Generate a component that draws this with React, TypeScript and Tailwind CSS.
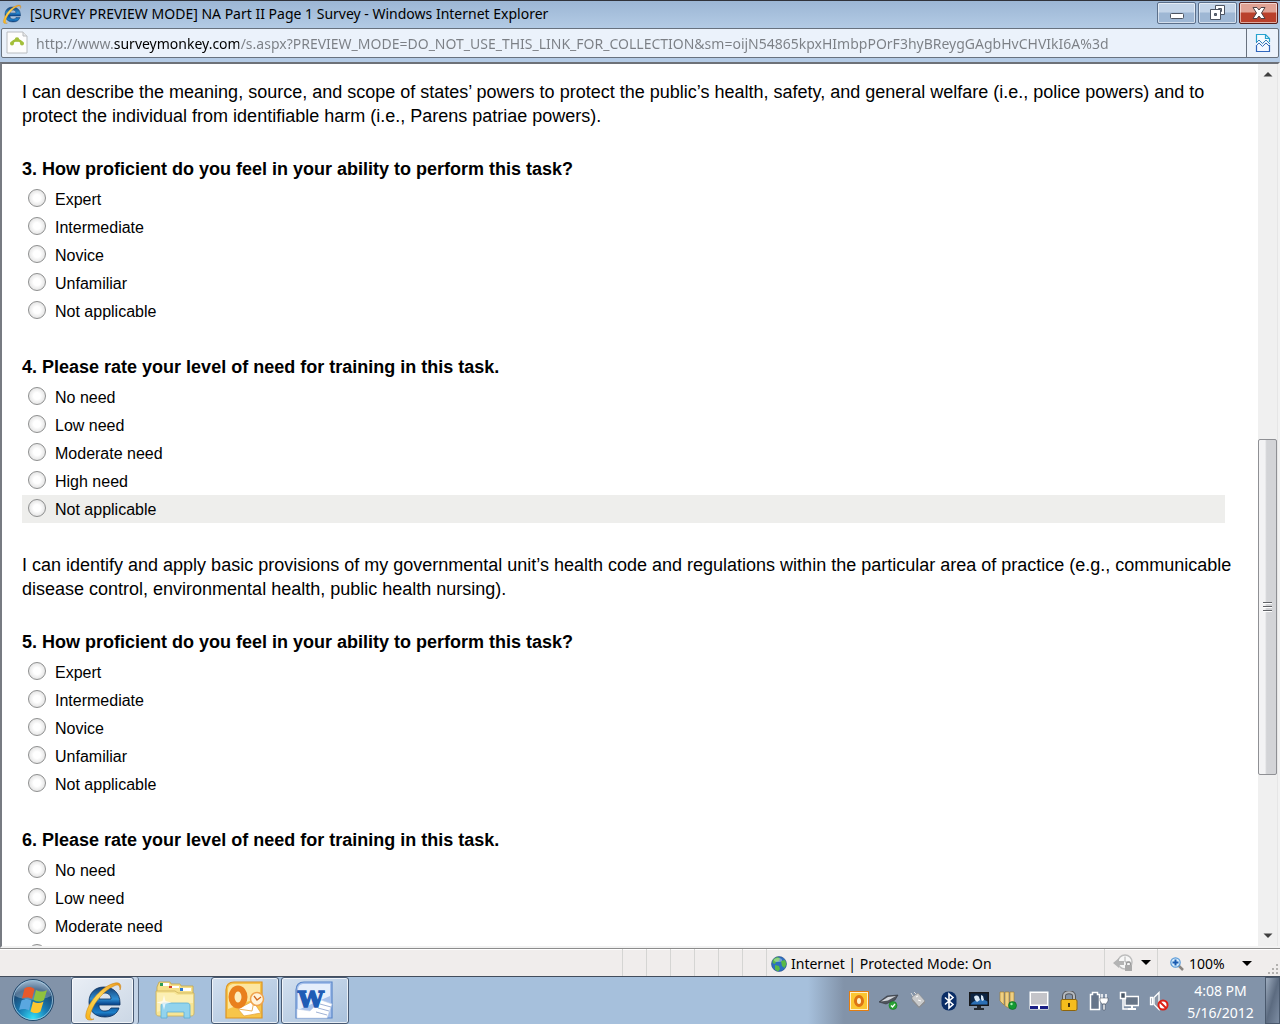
import React, { useState } from "react";

const PROFICIENCY = ["Expert", "Intermediate", "Novice", "Unfamiliar", "Not applicable"];
const NEED = ["No need", "Low need", "Moderate need", "High need", "Not applicable"];

function IeLogo({ className }: { className: string }) {
  return (
    <svg viewBox="0 0 40 40" className={className} aria-hidden="true">
      <defs>
        <linearGradient id="ieBlue" x1="0" y1="0" x2="0" y2="1">
          <stop offset="0" stopColor="#123f74" />
          <stop offset="0.4" stopColor="#2f8fd4" />
          <stop offset="0.55" stopColor="#0f4f97" />
          <stop offset="0.85" stopColor="#1c7fc9" />
          <stop offset="1" stopColor="#0f3f80" />
        </linearGradient>
        <linearGradient id="ieGold" x1="0" y1="1" x2="1" y2="0">
          <stop offset="0" stopColor="#f6b21a" />
          <stop offset="0.5" stopColor="#ffd95a" />
          <stop offset="1" stopColor="#e9981a" />
        </linearGradient>
      </defs>
      <path
        fillRule="evenodd"
        fill="url(#ieBlue)"
        stroke="#0a2f5c"
        strokeWidth="0.8"
        d="M21 6C30 6 37 12 37 22v2H16c0 4 2 6 6 6 3 0 5-1 6-3h8c-2 6-7 9-14 9C12 36 6 30 6 21S12 6 21 6ZM16 18h12c0-4-3-6-6-6s-6 2-6 6Z"
      />
      <path
        fill="url(#ieGold)"
        stroke="#c97c0c"
        strokeWidth="0.5"
        d="M37 9c2-5 0-8-5-7C21 4 8 18 4 29c-2 6-2 10 3 10 1 0 2 0 4-1-4 1-5-2-3-7C12 20 22 9 31 5c4-2 6-1 6 4Z"
      />
    </svg>
  );
}

function SurveyPageIcon() {
  return (
    <svg viewBox="0 0 22 24" className="h-6 w-[22px]" aria-hidden="true">
      <path d="M1 1h16l4 4v17H1z" fill="#fdfdfd" stroke="#b9bcc0" />
      <path d="M17 1v4h4" fill="#e8e8e8" stroke="#b9bcc0" />
      <path d="M5.500 13C7.500 8 14.500 8 16.500 13" fill="none" stroke="#a3bf3a" strokeWidth="2.500" />
      <circle cx="6" cy="12.500" r="2" fill="#a3bf3a" />
      <circle cx="16" cy="12.500" r="2" fill="#a3bf3a" />
      <circle cx="11" cy="8.500" r="2.200" fill="#a3bf3a" />
    </svg>
  );
}

function BrokenPageIcon() {
  return (
    <svg viewBox="0 0 16 20" className="h-5 w-4" fill="none" aria-hidden="true">
      <path d="M1.500 9V1.500h9l4 4V9" fill="#f4fbff" stroke="#27a3cf" strokeWidth="1.200" />
      <path d="M10.500 1.500v4h4" stroke="#27a3cf" strokeWidth="1.200" />
      <path d="M1.500 12v6.500h13V12" fill="#f4f8ff" stroke="#2f66bd" strokeWidth="1.200" />
      <path d="M1 10l3-3 3.500 3.500L11 7l4 4" stroke="#3a80b8" />
      <path d="M1 13l3-3 3.500 3.500L11 10l4 4" stroke="#3a70b8" />
    </svg>
  );
}

const windowButton =
  "flex h-[22px] w-[39px] items-center justify-center rounded-[2px] border shadow-[inset_0_0_0_1px_rgba(255,255,255,0.55)]";

function TitleBar() {
  return (
    <header className="flex h-7 shrink-0 items-start border-t border-[#303239] bg-linear-to-b from-[#9cb6d4] to-[#b3cbe5] pl-[2px]">
      <IeLogo className="mt-[3px] h-5 w-5" />
      <h1 className="ml-2 min-w-0 flex-1 truncate text-sm leading-[26px] text-black">
        [SURVEY PREVIEW MODE] NA Part II Page 1 Survey - Windows Internet Explorer
      </h1>
      <div className="mt-px mr-[2px] flex gap-[2px]">
        <button
          aria-label="Minimize"
          className={windowButton + " border-[#5b6f8a] bg-linear-to-b from-[#c3d4e8] from-45% to-[#9eb7d4] to-50%"}
        >
          <svg viewBox="0 0 14 14" className="h-[14px] w-[14px]" aria-hidden="true">
            <rect x="0.500" y="7.500" width="13" height="5" rx="1" fill="#fff" stroke="#4d5461" />
          </svg>
        </button>
        <button
          aria-label="Restore"
          className={windowButton + " border-[#5b6f8a] bg-linear-to-b from-[#c3d4e8] from-45% to-[#9eb7d4] to-50%"}
        >
          <svg viewBox="0 0 16 16" className="h-4 w-4" fillRule="evenodd" aria-hidden="true">
            <path d="M5.500 0.500h9v9h-9zM8.500 3.500v3h3v-3z" fill="#fff" stroke="#4d5461" />
            <path d="M0.500 4.500h10v10h-10zM4.500 8.500v2h2v-2z" fill="#fff" stroke="#4d5461" />
          </svg>
        </button>
        <button
          aria-label="Close"
          className={windowButton + " border-[#571c17] bg-linear-to-b from-[#e0a294] from-45% to-[#b9402b] to-50%"}
        >
          <svg viewBox="0 0 16 14" className="h-[14px] w-4" aria-hidden="true">
            <path
              d="M2 1.500h4L8 4l2-2.500h4L10.500 7l3.500 5.500h-4L8 10l-2 2.500H2L5.500 7z"
              fill="#fff"
              stroke="#4d4245"
            />
          </svg>
        </button>
      </div>
    </header>
  );
}

function AddressBar() {
  return (
    <div className="shrink-0 bg-[#b4cbe6] px-px pb-1">
      <div className="flex h-[30px] items-stretch rounded-[2px] border border-[#68727f] bg-[#ebf2fb]">
        <div className="flex items-center pl-1">
          <SurveyPageIcon />
        </div>
        <input
          aria-label="Address"
          readOnly
          className="ml-2 min-w-0 flex-1 bg-[linear-gradient(90deg,#7b7f85_78px,#000_78px,#000_203px,#7b7f85_203px)] bg-clip-text pt-px text-sm text-transparent outline-none"
          value="http://www.surveymonkey.com/s.aspx?PREVIEW_MODE=DO_NOT_USE_THIS_LINK_FOR_COLLECTION&sm=oijN54865kpxHImbpPOrF3hyBReygGAgbHvCHVIkI6A%3d"
        />
        <button
          aria-label="Compatibility view"
          className="flex w-8 items-center justify-center border-l border-[#68727f]"
        >
          <BrokenPageIcon />
        </button>
      </div>
    </div>
  );
}

function Question({
  number,
  text,
  options,
  highlighted,
}: {
  number: number;
  text: string;
  options: string[];
  highlighted?: string;
}) {
  const [choice, setChoice] = useState("");
  return (
    <fieldset className="mr-[9px] mb-[30px]">
      <legend className="mb-1 text-lg leading-6 font-bold">
        {number}. {text}
      </legend>
      {options.map((option) => (
        <label
          key={option}
          className={
            option === highlighted
              ? "flex h-7 items-center gap-[9px] bg-[#eeeeec] pl-1.5"
              : "flex h-7 items-center gap-[9px] pl-1.5"
          }
        >
          <input
            type="radio"
            name={"question-" + number}
            checked={choice === option}
            onChange={() => setChoice(option)}
            className="mb-0.5 h-[18px] w-[18px] appearance-none rounded-full border border-[#8e8f8f] bg-radial from-white from-30% to-[#d4d4d4] checked:from-[#2b7cab] checked:to-white"
          />
          <span className="mt-0.5 text-base">{option}</span>
        </label>
      ))}
    </fieldset>
  );
}

function Scrollbar() {
  return (
    <div className="flex w-5 shrink-0 flex-col items-stretch border-r border-[#e6e6e6] bg-[#f0f0f0]">
      <button aria-label="Scroll up" className="flex h-5 shrink-0 items-center justify-center">
        <svg viewBox="0 0 10 6" className="h-[6px] w-[10px]" aria-hidden="true">
          <path d="M0.500 5.500 5 1l4.500 4.500z" fill="#404040" />
        </svg>
      </button>
      <div className="grow-[356] basis-0" />
      <div className="flex grow-[335] basis-0 flex-col items-center justify-center gap-[2px] rounded-[2px] border border-[#8f9094] bg-linear-to-r from-[#f3f3f4] from-35% to-[#d3d4d7] to-45%">
        <span className="h-[2px] w-[9px] border-b border-white bg-[#606266]" />
        <span className="h-[2px] w-[9px] border-b border-white bg-[#606266]" />
        <span className="h-[2px] w-[9px] border-b border-white bg-[#606266]" />
      </div>
      <div className="grow-[151] basis-0" />
      <button aria-label="Scroll down" className="flex h-5 shrink-0 items-center justify-center">
        <svg viewBox="0 0 10 6" className="h-[6px] w-[10px]" aria-hidden="true">
          <path d="M0.500 0.500h9L5 5z" fill="#404040" />
        </svg>
      </button>
    </div>
  );
}

function SurveyPage() {
  return (
    <div className="flex min-h-0 flex-1 border-t-2 border-r-2 border-b-2 border-l-2 border-t-[#6d7178] border-r-[#f2f2f2] border-b-[#f2f2f2] border-l-[#777b82] bg-white">
      <main className="min-w-0 flex-1 overflow-y-auto pt-4 pr-6 pl-5 font-['Liberation_Sans',Arial,sans-serif] text-black [scrollbar-width:none]">
        <p className="mb-[29px] text-lg leading-6">
          I can describe the meaning, source, and scope of states’ powers to protect the public’s health,
          safety, and general welfare (i.e., police powers) and to protect the individual from identifiable
          harm (i.e., Parens patriae powers).
        </p>
        <Question
          number={3}
          text="How proficient do you feel in your ability to perform this task?"
          options={PROFICIENCY}
        />
        <Question
          number={4}
          text="Please rate your level of need for training in this task."
          options={NEED}
          highlighted="Not applicable"
        />
        <p className="mb-[29px] text-lg leading-6">
          I can identify and apply basic provisions of my governmental unit’s health code and regulations
          within the particular area of practice (e.g., communicable disease control, environmental health,
          public health nursing).
        </p>
        <Question
          number={5}
          text="How proficient do you feel in your ability to perform this task?"
          options={PROFICIENCY}
        />
        <Question
          number={6}
          text="Please rate your level of need for training in this task."
          options={NEED}
        />
      </main>
      <Scrollbar />
    </div>
  );
}

function Caret() {
  return (
    <svg viewBox="0 0 10 5" className="h-[5px] w-[10px]" aria-hidden="true">
      <path d="M0 0h10L5 5z" fill="#000" />
    </svg>
  );
}

function StatusBar() {
  return (
    <div className="flex h-7 shrink-0 border-t border-t-[#8c8c8c] bg-[#f0edec] text-sm text-black shadow-[inset_0_1px_0_#fff]">
      <div className="flex-1" />
      {[0, 1, 2, 3, 4, 5].map((cell) => (
        <div key={cell} className="w-6 border-l border-[#d5d5d3]" />
      ))}
      <div className="flex w-[338px] items-center gap-1 border-l border-[#d5d5d3] pt-0.5 pl-1">
        <svg viewBox="0 0 16 16" className="h-4 w-4" aria-hidden="true">
          <circle cx="8" cy="8" r="7.500" fill="#2c6fc0" stroke="#2b4f86" strokeWidth="0.600" />
          <path d="M2 3.500 6 1l3 1-1 3-3 1-1 2-2.500-1zM10 5l4-1 1.500 4-2 4-2.500-2zM4 9l4 1 1 3-2 2.500-3-2z" fill="#58b947" />
          <ellipse cx="7" cy="4" rx="4" ry="2" fill="#fff" opacity="0.350" />
        </svg>
        <span>Internet | Protected Mode: On</span>
      </div>
      <button aria-label="InPrivate filtering" className="flex w-[53px] items-center gap-2 border-l border-[#d5d5d3] pl-2">
        <svg viewBox="0 0 20 18" className="h-[18px] w-5" fill="none" aria-hidden="true">
          <circle cx="12" cy="8" r="7" fill="#f7f7f7" stroke="#bdbdbd" strokeWidth="1.500" />
          <path d="M12 2.500v5.500h5" stroke="#b0b0b0" />
          <path d="m0 9 6-5v3h5v4H6v3z" fill="#b4b4b4" />
          <rect x="12" y="11" width="7" height="6" rx="0.500" fill="#a9a9a9" />
          <path d="M13.500 11V9.500c0-2 4-2 4 0V11" stroke="#999" strokeWidth="1.300" />
        </svg>
        <Caret />
      </button>
      <div className="flex w-[123px] items-stretch justify-between border-l border-[#d5d5d3] pl-3">
        <button className="flex items-center gap-[5px] pt-0.5">
          <svg viewBox="0 0 14 14" className="h-[14px] w-[14px]" fill="none" aria-hidden="true">
            <path d="m8 8 5 5" stroke="#8a8580" strokeWidth="2.500" />
            <circle cx="5.500" cy="5.500" r="4.700" fill="#d6ecfc" stroke="#5b9bd8" strokeWidth="1.200" />
            <path d="M5.500 2.500v6M2.500 5.500h6" stroke="#1b5bb0" strokeWidth="2" />
          </svg>
          <span>100%</span>
          <span className="ml-3">
            <Caret />
          </span>
        </button>
        <svg viewBox="0 0 12 12" className="h-3 w-3 self-end" fill="#b4b2b0" aria-hidden="true">
          <path d="M8 0h2v2H8zM4 4h2v2H4zM8 4h2v2H8zM0 8h2v2H0zM4 8h2v2H4zM8 8h2v2H8z" />
        </svg>
      </div>
    </div>
  );
}

function StartOrb() {
  return (
    <svg viewBox="0 0 44 44" className="h-11 w-11" aria-hidden="true">
      <defs>
        <radialGradient id="orb" cx="0.5" cy="0.95" r="0.9">
          <stop offset="0" stopColor="#35e0f8" />
          <stop offset="0.4" stopColor="#1a7db5" />
          <stop offset="0.8" stopColor="#1b4570" />
          <stop offset="1" stopColor="#6f93b4" />
        </radialGradient>
      </defs>
      <circle cx="22" cy="21" r="20.500" fill="url(#orb)" stroke="#24486b" />
      <circle cx="22" cy="21" r="19.500" fill="none" stroke="#a9cfe5" strokeWidth="0.800" />
      <path d="M4 17C5 7 13 2 22 2s17 5 18 15c-10 5-26 5-36 0Z" fill="#fff" opacity="0.260" />
      <path d="M13.500 9.500c3-2 6.500-2 10 0.500L21 20c-3-2-6-2-10-0.500z" fill="#e8592b" />
      <path d="M25 11c4 2 7 2 11 0l-3 10c-3 2-7 2-10.500 0z" fill="#8fc23e" />
      <path d="M10.500 21.500c4-2 7-2 10 0L18 31.500c-3-2-6-2-10-0.500z" fill="#5aa7e0" />
      <path d="M22 22.500c4 2 7 2 10.500 0l-3 10c-3 2-6 2-10 0z" fill="#fcc630" />
    </svg>
  );
}

function FolderIcon() {
  return (
    <svg viewBox="0 0 42 40" className="h-10 w-[42px]" aria-hidden="true">
      <path d="M3 6 5 1h11l1 2h9l1 2h12v8H3z" fill="#f5e08b" stroke="#c3a548" strokeWidth="0.800" />
      <path d="M6 2h3v3H6z" fill="#2f9c55" />
      <path d="M15 5h3v2h-3z" fill="#d3412c" />
      <path d="M26 7h3v3h-3z" fill="#2d78cf" />
      <path d="M9 2h6v3H9zM18 5h7v2h-7zM29 7h8v3h-8z" fill="#fff" />
      <path d="M2 10h19l3 2h16v20c0 2-1 3-3 3H5c-2 0-3-1-3-3z" fill="#f7e596" stroke="#cbb057" strokeWidth="0.800" />
      <path d="M3 12h17l3 2h16v8C24 21 14 27 3 31z" fill="#fdf3bf" opacity="0.700" />
      <path d="M7 37V25c0-2 1-3 3-3h23c2 0 3 1 3 3v12h-6v-6H13v6z" fill="#92d3ed" stroke="#5aaed6" strokeWidth="0.800" />
      <path d="m10 14 1.500 6 6 1.500-6 1.500-1.500 6-1.500-6-6-1.500 6-1.500z" fill="#fff" opacity="0.700" />
    </svg>
  );
}

function OutlookIcon() {
  return (
    <svg viewBox="0 0 40 40" className="h-10 w-10" aria-hidden="true">
      <path d="M1 9c0-5 3-8 8-8h28v36H1z" fill="#f7c54a" stroke="#dd9320" strokeWidth="1.200" />
      <path d="M3 9c0-4 2-6 6-6h26v13L3 28z" fill="#fde6a0" />
      <path d="m13 28 15-8 8 12-17 3z" fill="#fff" stroke="#e6a641" strokeWidth="0.800" />
      <path d="m13 28 14 2 2-10" fill="none" stroke="#eab45d" />
      <circle cx="32" cy="18" r="6.500" fill="#fff3da" stroke="#f0a44d" strokeWidth="1.500" />
      <path d="m29 15 3 4 4-3" fill="none" stroke="#d2691e" strokeWidth="1.300" />
      <ellipse cx="13" cy="16" rx="6.500" ry="8.500" fill="#fdedbd" stroke="#e9801d" strokeWidth="6" />
    </svg>
  );
}

function WordIcon() {
  return (
    <svg viewBox="0 0 40 40" className="h-10 w-10" aria-hidden="true">
      <path d="M1 9c0-5 3-8 8-8h28v36H1z" fill="#a8c2ec" stroke="#5a86c9" strokeWidth="1.200" />
      <path d="M3 9c0-4 2-6 6-6h26v12L3 29z" fill="#e6effc" />
      <path d="m2 28 13 2 11-11 11 4-5 14H2z" fill="#fff" stroke="#c9d5ea" strokeWidth="0.600" />
      <path d="m25 23 11 3M23 27l11 3M21 31l11 3" stroke="#9fb2d5" />
      <text
        x="16"
        y="26"
        textAnchor="middle"
        fontFamily="'DejaVu Serif', serif"
        fontSize="23"
        fontWeight="700"
        fill="#1f5cb5"
        stroke="#1f5cb5"
        strokeWidth="1.5"
      >
        W
      </text>
    </svg>
  );
}

const trayIcons: { name: string; art: React.ReactNode }[] = [
  {
    name: "Outlook",
    art: (
      <>
        <rect x="0.500" y="0.500" width="19" height="19" fill="#fbc632" stroke="#e27d12" />
        <rect x="1.500" y="1.500" width="17" height="17" fill="none" stroke="#fff1c8" />
        <ellipse cx="10" cy="10" rx="3.500" ry="4.500" fill="#fff2c4" stroke="#dd7413" strokeWidth="3" />
      </>
    ),
  },
  {
    name: "Safely remove hardware",
    art: (
      <>
        <path d="m0 11 8-6 11-1-3 5-9 4z" fill="#4f545c" stroke="#2f3339" strokeWidth="0.600" />
        <path d="m2 10.500 7-4.500 8-1-8 4.500z" fill="#d3d7dd" />
        <circle cx="14" cy="14.500" r="4" fill="#2ba336" stroke="#177521" strokeWidth="0.600" />
        <path d="m12 14.500 1.500 1.500 2.500-3" fill="none" stroke="#fff" strokeWidth="1.300" />
      </>
    ),
  },
  {
    name: "Card reader",
    art: (
      <>
        <path d="m3 6 6-4 7 8-6 6-7-8z" fill="#c9cacb" stroke="#88898b" strokeWidth="0.600" />
        <path d="m3 8 7 8 6-6v2l-6 5-7-7z" fill="#8d8e90" />
        <path d="M4 5 2 2M7 3 5 1" stroke="#dedede" />
        <path d="m7 6 2-1M9 9l3 1" stroke="#fff" />
      </>
    ),
  },
  {
    name: "Bluetooth",
    art: (
      <>
        <rect x="2.500" y="0.500" width="15" height="19" rx="7" fill="#0a2d66" />
        <path d="m6 6.500 8 7-4 3.500V3l4 3.500-8 7" fill="none" stroke="#fff" strokeWidth="1.600" />
      </>
    ),
  },
  {
    name: "Display",
    art: (
      <>
        <path d="M0 1h20v14H0z" fill="#16181c" />
        <path d="M1.500 2.500h17v11h-17z" fill="#0d2544" />
        <path d="M1.500 13.500c4-6 13-6 17-3v3z" fill="#2b6fb5" />
        <path d="M5 6c1-2 4-2 5 0l1 3-3 2-2-2zM12 4l2 1 1 4-2 1-1-2z" fill="#d9e8f5" />
        <path d="M8 15h4v2h3v2H5v-2h3z" fill="#252a31" />
      </>
    ),
  },
  {
    name: "Device manager",
    art: (
      <>
        <path d="M1 1h4v13l-4-4zM6 1h4v16l-4-2zM11 1h4v14l-4 2z" fill="#efd083" stroke="#9f7a28" strokeWidth="0.600" />
        <circle cx="13.500" cy="14.500" r="4" fill="#149a32" stroke="#0a5f1d" strokeWidth="0.600" />
        <circle cx="12.500" cy="13" r="1.200" fill="#a4ebaa" />
      </>
    ),
  },
  {
    name: "Touchpad",
    art: (
      <>
        <path d="M0.500 0.500h19v18h-19z" fill="#fff" />
        <path d="M1.500 1.500h17V14h-17z" fill="#c4c4c9" stroke="#fff" />
        <path d="M1 15h8v3H1zM11 15h8v3h-8z" fill="#1a1f86" />
      </>
    ),
  },
  {
    name: "Lock",
    art: (
      <>
        <path d="M5 10V5c0-5 10-5 10 0v5" fill="none" stroke="#54575c" strokeWidth="4" />
        <path d="M5 10V5c0-5 10-5 10 0v5" fill="none" stroke="#b5b9be" strokeWidth="2" />
        <rect x="2" y="8.500" width="16" height="11" rx="1.500" fill="#f5bd1c" stroke="#8e650b" />
        <path d="M9 12h2v4H9z" fill="#4a3508" />
      </>
    ),
  },
  {
    name: "Power",
    art: (
      <>
        <path d="M1.500 3.500h2V1.500h5v2h2v15h-9z" fill="#66758a" stroke="#fff" strokeWidth="1.500" />
        <path d="M13 3v4M17 3v4" stroke="#fff" strokeWidth="1.500" />
        <path d="M11 7h8v3l-2 3h-4l-2-3zM14 13h2v6h-2z" fill="#fff" stroke="#3a4554" strokeWidth="0.500" />
      </>
    ),
  },
  {
    name: "Network",
    art: (
      <>
        <path d="M6 5.500h13.500v9H6z" fill="#677587" stroke="#fff" strokeWidth="1.500" />
        <path d="M9 18h8M13 15v3" stroke="#fff" strokeWidth="2" />
        <path d="M1.500 1.500h5v6h-5z" fill="#4b5868" stroke="#fff" strokeWidth="1.500" />
        <path d="M4 8v10h5" fill="none" stroke="#fff" strokeWidth="1.500" />
      </>
    ),
  },
  {
    name: "Volume muted",
    art: (
      <>
        <path d="M1.500 6.500h2v7h-2zM5 6.500l5-5v17l-5-5z" fill="#8b98a8" stroke="#fff" strokeWidth="1.300" />
        <circle cx="14" cy="14" r="4.500" fill="#fff" stroke="#dc2016" strokeWidth="2" />
        <path d="m11 11 6 6" stroke="#dc2016" strokeWidth="2" />
      </>
    ),
  },
];

const taskButton =
  "flex h-[47px] items-center justify-center rounded-[3px] border border-[#485a73] shadow-[inset_0_0_0_1px_rgba(255,255,255,0.7)]";

function Taskbar() {
  return (
    <nav
      aria-label="Taskbar"
      className="flex h-12 shrink-0 items-stretch border-t border-[#434d5c] bg-[#a6c0dc]"
    >
      <div className="flex w-[71px] items-center bg-[#8293a9] pl-[11px]">
        <button aria-label="Start">
          <StartOrb />
        </button>
      </div>
      <div className="flex w-[68px] rounded-[3px] border-r border-[#5c6e86] bg-[#c3d3e6]">
        <button
          aria-label="Internet Explorer"
          className={taskButton + " w-[63px] bg-linear-to-br from-[#e9eef5] to-[#cbd7e5]"}
        >
          <IeLogo className="h-10 w-10" />
        </button>
      </div>
      <button aria-label="Windows Explorer" className="flex w-[72px] items-center justify-center">
        <FolderIcon />
      </button>
      <button
        aria-label="Microsoft Outlook"
        className={taskButton + " w-[68px] bg-linear-to-br from-[#d3e0ef] to-[#a9c1dc]"}
      >
        <OutlookIcon />
      </button>
      <button
        aria-label="Microsoft Word"
        className={taskButton + " ml-[2px] w-[68px] bg-linear-to-br from-[#d3e0ef] to-[#a9c1dc]"}
      >
        <WordIcon />
      </button>
      <div className="flex-1" />
      <div className="w-9 bg-linear-to-r from-[#a6c0dc] to-[#8293a9]" />
      <div className="flex items-center bg-[#8293a9]">
        {trayIcons.map((icon) => (
          <button key={icon.name} aria-label={icon.name} className="flex w-[30px] justify-center">
            <svg viewBox="0 0 20 20" className="h-5 w-5" aria-hidden="true">
              {icon.art}
            </svg>
          </button>
        ))}
      </div>
      <div className="flex w-[91px] flex-col items-center justify-center bg-[#8293a9] pt-0.5 pl-0.5 text-sm leading-[22px] text-white">
        <time>4:08 PM</time>
        <time>5/16/2012</time>
      </div>
      <button
        aria-label="Show desktop"
        className="w-[15px] border border-[#4a596d] bg-linear-to-br from-[#9fadbf] via-[#5c6b80] to-[#7d8da3]"
      />
    </nav>
  );
}

export default function App() {
  return (
    <div className="flex h-screen flex-col overflow-hidden bg-[#b4cbe6] font-['Noto_Sans','Open_Sans',sans-serif]">
      <TitleBar />
      <AddressBar />
      <SurveyPage />
      <StatusBar />
      <Taskbar />
    </div>
  );
}
